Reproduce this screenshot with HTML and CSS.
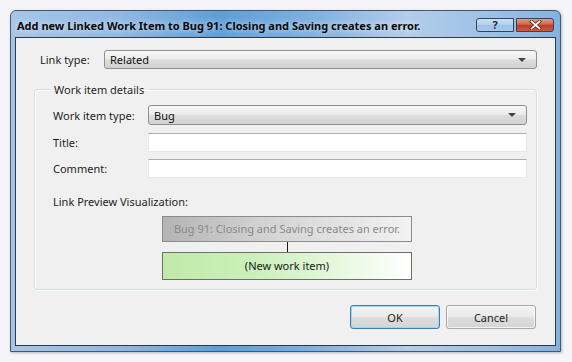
FILE: index.html
```html
<!DOCTYPE html>
<html>
<head>
<meta charset="utf-8">
<link rel="stylesheet" href="styles.css">
</head>
<body>
<div class="window">
  <div class="titlebar">
    <div class="title">Add new Linked Work Item to Bug 91: Closing and Saving creates an error.</div>
    <div class="caption-buttons">
      <div class="cap help">?</div>
      <div class="cap close">
        <svg width="13" height="10" viewBox="0 0 13 10"><path d="M2.5 1.5 L10.5 8.5 M10.5 1.5 L2.5 8.5" stroke="#6a2418" stroke-width="3.4" stroke-linecap="square"/><path d="M2.5 1.5 L10.5 8.5 M10.5 1.5 L2.5 8.5" stroke="#ffffff" stroke-width="1.7" stroke-linecap="square"/></svg>
      </div>
    </div>
  </div>
  <div class="client">
    <div class="row link-row">
      <span class="label">Link type:</span>
      <div class="combo wide"><span>Related</span><span class="arrow"></span></div>
    </div>
    <fieldset class="group">
      <legend>Work item details</legend>
      <div class="form">
        <span class="label">Work item type:</span>
        <div class="combo"><span>Bug</span><span class="arrow"></span></div>
        <span class="label">Title:</span>
        <div class="input"></div>
        <span class="label">Comment:</span>
        <div class="input"></div>
      </div>
      <div class="preview-label">Link Preview Visualization:</div>
      <div class="preview">
        <div class="node parent">Bug 91: Closing and Saving creates an error.</div>
        <div class="connector"></div>
        <div class="node child">(New work item)</div>
      </div>
    </fieldset>
    <div class="buttons">
      <div class="btn default">OK</div>
      <div class="btn">Cancel</div>
    </div>
  </div>
</div>
</body>
</html>
```

FILE: styles.css
```css
html, body {
  margin: 0;
  padding: 0;
}
body {
  background: #f5f5f9;
  width: 572px;
  height: 362px;
  overflow: hidden;
  font-family: "Noto Sans", "Open Sans", sans-serif;
  font-size: 11px;
  color: #1e1e1e;
}
.window {
  margin: 10px 0 0 10px;
  width: 551px;
  height: 342px;
  box-sizing: border-box;
  border: 1px solid #47586e;
  border-radius: 6px 6px 0 0;
  background: linear-gradient(90deg, #a6c6e8 0%, #8fb8e2 20%, #5d9ed8 38%, #7fb0e0 55%, #b3cdea 72%, #9cc0e6 88%, #84b2e0 100%);
  display: flex;
  flex-direction: column;
  padding: 0 4px 5px 4px;
  box-shadow: 1px 1px 3px rgba(0,0,0,0.25);
}
.titlebar {
  height: 26px;
  display: flex;
  align-items: flex-start;
  justify-content: space-between;
  flex: none;
}
.title {
  font-family: "Noto Sans", sans-serif;
  font-weight: bold;
  font-size: 11px;
  color: #0a0a0a;
  margin: 7px 0 0 2px;
  white-space: nowrap;
  text-shadow: 0 0 6px rgba(255,255,255,0.8);
}
.caption-buttons {
  display: flex;
  gap: 2px;
  margin: 7px 2px 0 0;
}
.cap {
  height: 14px;
  box-sizing: border-box;
  border: 1px solid #33455e;
  display: flex;
  align-items: center;
  justify-content: center;
}
.help {
  width: 38px;
  border-radius: 3px 0 0 3px;
  background: linear-gradient(180deg, #c9def3 0%, #b4d0ee 50%, #9ec1e6 51%, #a9caec 100%);
  font-size: 11px;
  font-weight: bold;
  color: #1c2b40;
  line-height: 12px;
}
.close {
  width: 38px;
  border-radius: 0 3px 3px 0;
  background: linear-gradient(180deg, #e49a8b 0%, #d5644f 45%, #c23b22 50%, #cf5a3c 100%);
}
.client {
  flex: 1;
  background: #f0f0f0;
  border: 1px solid #2f3a45;
  display: flex;
  flex-direction: column;
  padding: 12px 18px 16px 18px;
}
.row {
  display: flex;
  align-items: center;
}
.link-row {
  padding-left: 6px;
}
.link-row .label {
  width: 64px;
}
.combo {
  height: 20px;
  box-sizing: border-box;
  border: 1px solid #8e8f8f;
  border-radius: 3px;
  background: linear-gradient(180deg, #f7f7f7 0%, #ececec 45%, #dcdcdc 55%, #d2d2d2 100%);
  display: flex;
  align-items: center;
  justify-content: space-between;
  padding: 0 10px 0 5px;
  color: #111;
}
.combo.wide {
  flex: 1;
  height: 19px;
}
.arrow {
  width: 0;
  height: 0;
  border-left: 4px solid transparent;
  border-right: 4px solid transparent;
  border-top: 4px solid #444;
}
.group {
  margin: 13px 0 0 0;
  border: 1px solid #d5dfe5;
  box-shadow: inset 1px 1px 0 #fff, 1px 1px 0 #fff;
  border-radius: 3px;
  padding: 8px 9px 10px 18px;
  height: 208px;
  box-sizing: border-box;
  min-width: 0;
}
.group legend {
  padding: 0 5px 0 3px;
  margin-left: -2px;
  color: #1e1e1e;
}
.form {
  display: grid;
  grid-template-columns: 95px 1fr;
  row-gap: 7px;
  align-items: center;
}
.input {
  height: 19px;
  box-sizing: border-box;
  background: #fff;
  border: 1px solid #e3e9ef;
  border-top-color: #abadb3;
}
.form .input:nth-of-type(2) {
  margin-top: 1px;
}
.preview-label {
  margin-top: 16px;
}
.preview {
  display: flex;
  flex-direction: column;
  align-items: flex-start;
  margin: 7px 0 0 109px;
}
.node {
  width: 250px;
  box-sizing: border-box;
  text-align: center;
}
.parent {
  height: 26px;
  line-height: 24px;
  border: 1px solid #8c8c8c;
  background: linear-gradient(90deg, #b4b4b4 0%, #d2d2d2 40%, #f2f2f2 100%);
  color: #8a8a8a;
}
.connector {
  width: 1px;
  height: 10px;
  background: #1a1a1a;
  margin-left: 125px;
}
.child {
  height: 28px;
  line-height: 26px;
  border: 1px solid #6e6e6e;
  background: linear-gradient(90deg, #bfeaa8 0%, #cdf0bd 40%, #ffffff 100%);
  color: #1a1a1a;
}
.buttons {
  margin-top: auto;
  display: flex;
  justify-content: flex-end;
  gap: 6px;
  padding-right: 1px;
}
.btn {
  width: 90px;
  height: 24px;
  box-sizing: border-box;
  border: 1px solid #a7a7a7;
  border-radius: 3px;
  background: linear-gradient(180deg, #f3f3f3 0%, #ebebeb 45%, #dddddd 55%, #d4d4d4 100%);
  display: flex;
  align-items: center;
  justify-content: center;
  box-shadow: inset 0 0 0 1px rgba(255,255,255,0.7);
}
.btn.default {
  border-color: #3c7fb1;
  box-shadow: inset 0 0 0 1px #9fd6f1;
}
```
